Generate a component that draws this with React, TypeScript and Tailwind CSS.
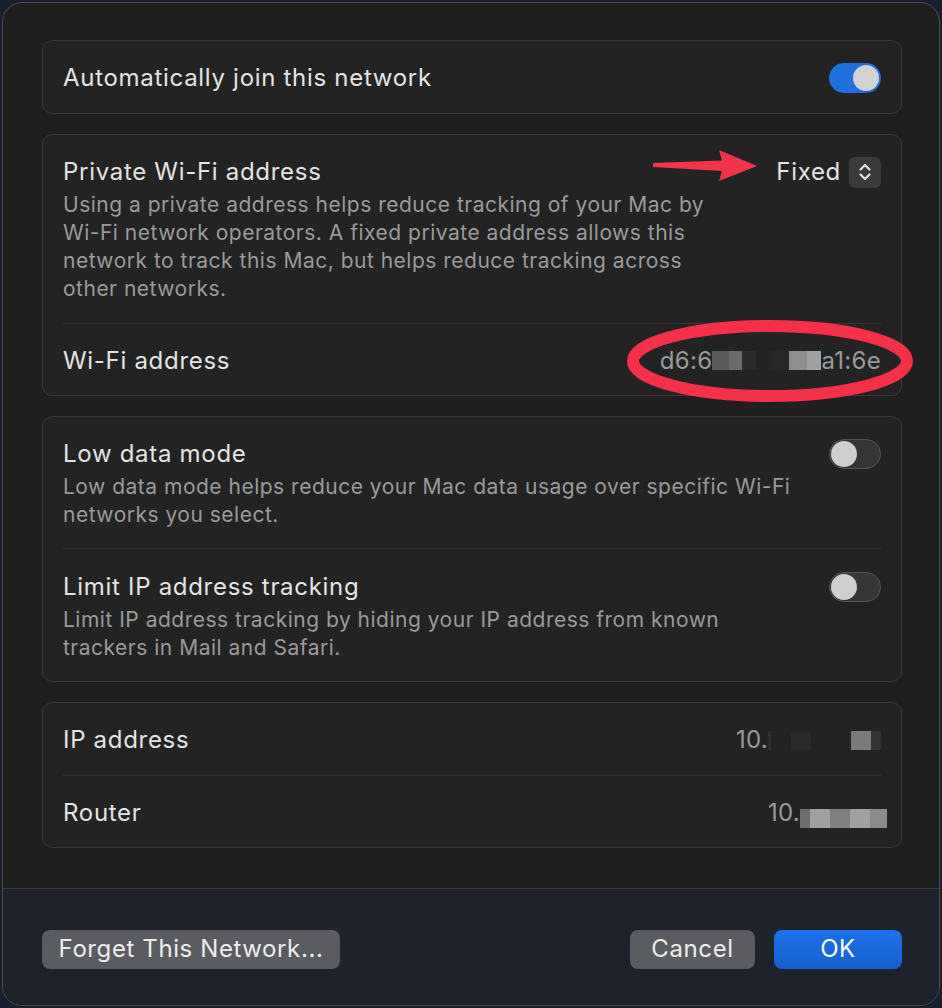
import React from 'react';

const font = { fontFamily: 'Inter, "Noto Sans", sans-serif' };

function Toggle({ on }: { on: boolean }) {
  return on ? (
    <div className="flex h-[30px] w-[52px] shrink-0 items-center justify-end rounded-full bg-[#1f6fdc] pr-[2px]">
      <div className="h-[26px] w-[26px] rounded-full bg-[#d2d2d2]" />
    </div>
  ) : (
    <div className="flex h-[30px] w-[52px] shrink-0 items-center rounded-full border border-[#555555] bg-[#353535] pl-[1px]">
      <div className="h-[26px] w-[26px] rounded-full bg-[#cfcfcf]" />
    </div>
  );
}

function Blocks({ items }: { items: [number, string][] }) {
  return (
    <span className="inline-flex h-[19px] items-stretch">
      {items.map(([w, c], i) => (
        <span key={i} className="h-full" style={{ width: w, background: c }} />
      ))}
    </span>
  );
}

function Card({ children }: { children: React.ReactNode }) {
  return (
    <div className="rounded-[10px] border border-[#393939] bg-[#232323] px-[20px]">{children}</div>
  );
}

const label = 'text-[24px] tracking-[0.7px] text-[#e3e3e3]';
const value = 'flex items-center text-[24px] tracking-[0.3px] text-[#9a9a9a]';

function Row({ title, children, divider }: { title: string; children?: React.ReactNode; divider?: boolean }) {
  return (
    <div className={`flex h-[72px] items-center justify-between pt-[2px] ${divider ? 'border-t border-[#353535]' : ''}`}>
      <span className={label}>{title}</span>
      {children}
    </div>
  );
}

function Section({
  title,
  desc,
  right,
  divider,
  pad,
  width,
}: {
  title: string;
  desc: string;
  right?: React.ReactNode;
  divider?: boolean;
  pad: string;
  width: string;
}) {
  return (
    <div className={`${pad} ${divider ? 'border-t border-[#353535]' : ''}`}>
      <div className="flex h-[30px] items-center justify-between">
        <span className={label}>{title}</span>
        {right}
      </div>
      <p className={`mt-[4px] ${width} text-[21px] leading-[28px] tracking-[0.5px] text-[#9a9a9a]`}>{desc}</p>
    </div>
  );
}

export default function App() {
  return (
    <div className="h-[1008px] w-[942px] bg-[#182030] p-[2px]" style={font}>
      <div className="relative flex h-[1004px] w-[938px] flex-col overflow-hidden rounded-[20px] border border-[#4e4e4e] bg-[#1f1f1f]">
        <div className="flex flex-1 flex-col gap-[20px] pl-[39px] pr-[37px] pt-[37px]">
          <Card>
            <Row title="Automatically join this network">
              <Toggle on />
            </Row>
          </Card>

          <Card>
            <Section
              pad="pt-[22px] pb-[20px]"
              width="max-w-[665px]"
              title="Private Wi-Fi address"
              desc="Using a private address helps reduce tracking of your Mac by Wi-Fi network operators. A fixed private address allows this network to track this Mac, but helps reduce tracking across other networks."
              right={
                <div className="flex items-center gap-[8px]">
                  <span className={label}>Fixed</span>
                  <div className="flex h-[31px] w-[32px] items-center justify-center rounded-[6px] bg-[#3a3a3a]">
                    <svg width="14" height="20" viewBox="0 0 14 20" fill="none" stroke="#e0e0e0" strokeWidth="2.2" strokeLinecap="round" strokeLinejoin="round">
                      <path d="M2.5 7.5 L7 3 L11.5 7.5" />
                      <path d="M2.5 12.5 L7 17 L11.5 12.5" />
                    </svg>
                  </div>
                </div>
              }
            />
            <Row title="Wi-Fi address" divider>
              <span className={value}>
                d6:6
                <Blocks
                  items={[
                    [17, '#5a5a5a'],
                    [13, '#6b6b6b'],
                    [14, '#2b2b2b'],
                    [15, '#232323'],
                    [18, '#282828'],
                    [18, '#8e8e8e'],
                    [14, '#a0a0a0'],
                  ]}
                />
                a1:6e
              </span>
            </Row>
          </Card>

          <Card>
            <Section
              pad="pt-[22px] pb-[19px]"
              width="max-w-[735px]"
              title="Low data mode"
              desc="Low data mode helps reduce your Mac data usage over specific Wi-Fi networks you select."
              right={<Toggle on={false} />}
            />
            <Section
              divider
              pad="pt-[23px] pb-[19px]"
              width="max-w-[735px]"
              title="Limit IP address tracking"
              desc="Limit IP address tracking by hiding your IP address from known trackers in Mail and Safari."
              right={<Toggle on={false} />}
            />
          </Card>

          <Card>
            <Row title="IP address">
              <span className={value}>
                10.
                <Blocks
                  items={[
                    [3, '#2f2f2f'],
                    [20, '#232323'],
                    [20, '#2a2a2a'],
                    [40, '#232323'],
                    [20, '#7a7a7a'],
                    [10, '#333333'],
                  ]}
                />
              </span>
            </Row>
            <Row title="Router" divider>
              <span className={`-mr-[6px] ${value}`}>
                10.
                <span className="mt-[12px] flex">
                  <Blocks
                    items={[
                      [10, '#6e6e6e'],
                      [20, '#a0a0a0'],
                      [20, '#7f7f7f'],
                      [20, '#a0a0a0'],
                      [17, '#8a8a8a'],
                    ]}
                  />
                </span>
              </span>
            </Row>
          </Card>
        </div>

        <div className="flex h-[117px] items-center justify-between border-t border-[#383b42] bg-[#1f222a] pl-[39px] pr-[37px] pt-[4px]">
          <button className="h-[39px] w-[298px] rounded-[8px] bg-[#5a5c61] text-[24px] tracking-[0.6px] text-[#ececec]">
            Forget This Network...
          </button>
          <div className="flex gap-[19px]">
            <button className="h-[39px] w-[125px] rounded-[8px] bg-[#5a5c61] text-[24px] tracking-[0.6px] text-[#ececec]">
              Cancel
            </button>
            <button className="h-[39px] w-[128px] rounded-[8px] bg-gradient-to-b from-[#1e72e8] to-[#155fd0] text-[24px] tracking-[0.6px] text-white">
              OK
            </button>
          </div>
        </div>

        <svg className="pointer-events-none absolute left-[-3px] top-[-3px]" width="942" height="1008">
          <polygon points="653,163 722,160.5 719,150 757,166 719,181 722,171 653,167" fill="#f5334a" />
          <ellipse cx="770" cy="361" rx="137" ry="35" fill="none" stroke="#f7304a" strokeWidth="12" />
        </svg>
      </div>
    </div>
  );
}
